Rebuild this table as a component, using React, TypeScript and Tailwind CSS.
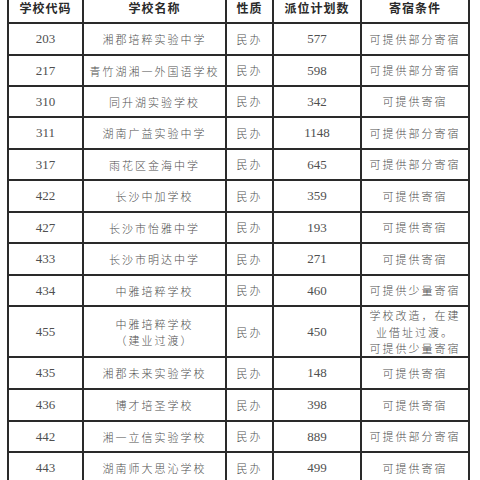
const rows: {
  code: string;
  name: string[];
  type: string;
  quota: string;
  lodging: string[];
  h: string;
}[] = [
  { code: "203", name: ["湘郡培粹实验中学"], type: "民办", quota: "577", lodging: ["可提供部分寄宿"], h: "h-[32px]" },
  { code: "217", name: ["青竹湖湘一外国语学校"], type: "民办", quota: "598", lodging: ["可提供部分寄宿"], h: "h-[31px]" },
  { code: "310", name: ["同升湖实验学校"], type: "民办", quota: "342", lodging: ["可提供寄宿"], h: "h-[31px]" },
  { code: "311", name: ["湖南广益实验中学"], type: "民办", quota: "1148", lodging: ["可提供部分寄宿"], h: "h-[32px]" },
  { code: "317", name: ["雨花区金海中学"], type: "民办", quota: "645", lodging: ["可提供部分寄宿"], h: "h-[31px]" },
  { code: "422", name: ["长沙中加学校"], type: "民办", quota: "359", lodging: ["可提供寄宿"], h: "h-[32px]" },
  { code: "427", name: ["长沙市怡雅中学"], type: "民办", quota: "193", lodging: ["可提供寄宿"], h: "h-[31px]" },
  { code: "433", name: ["长沙市明达中学"], type: "民办", quota: "271", lodging: ["可提供寄宿"], h: "h-[32px]" },
  { code: "434", name: ["中雅培粹学校"], type: "民办", quota: "460", lodging: ["可提供少量寄宿"], h: "h-[31px]" },
  {
    code: "455",
    name: ["中雅培粹学校", "（建业过渡）"],
    type: "民办",
    quota: "450",
    lodging: ["学校改造，在建", "业借址过渡。", "可提供少量寄宿"],
    h: "h-[51px]",
  },
  { code: "435", name: ["湘郡未来实验学校"], type: "民办", quota: "148", lodging: ["可提供寄宿"], h: "h-[32px]" },
  { code: "436", name: ["博才培圣学校"], type: "民办", quota: "398", lodging: ["可提供寄宿"], h: "h-[32px]" },
  { code: "442", name: ["湘一立信实验学校"], type: "民办", quota: "889", lodging: ["可提供部分寄宿"], h: "h-[31px]" },
  { code: "443", name: ["湖南师大思沁学校"], type: "民办", quota: "499", lodging: ["可提供寄宿"], h: "h-[32px]" },
];

const cjk = "font-['Noto_Sans_CJK_SC',sans-serif]";
const num = "font-['Liberation_Serif','Noto_Sans_CJK_SC',serif]";
const cell = "flex flex-col items-center justify-center border-r-2 border-[#2a2a2a] text-center";

export default function App() {
  return (
    <div className="h-[480px] w-[480px] overflow-hidden bg-white">
      <div className="ml-[7px] mt-[-8px] w-[463px] border-l-2 border-[#2a2a2a]">
        <div className="grid h-[32px] grid-cols-[75px_143px_47px_88px_108px] border-b-2 border-[#2a2a2a]">
          {["学校代码", "学校名称", "性质", "派位计划数", "寄宿条件"].map((t) => (
            <div
              key={t}
              className={`${cell} ${cjk} pt-[1px] text-[12px] font-bold tracking-[1px] text-[#2a2a2a]`}
            >
              {t}
            </div>
          ))}
        </div>
        {rows.map((r) => (
          <div
            key={r.code}
            className={`grid ${r.h} grid-cols-[75px_143px_47px_88px_108px] border-b-2 border-[#2a2a2a] text-[#505050]`}
          >
            <div className={`${cell} ${num} text-[13px]`}>{r.code}</div>
            <div className={`${cell} ${cjk} text-[11px] font-light leading-[16px] tracking-[2px]`}>
              {r.name.map((n) => (
                <span key={n}>{n}</span>
              ))}
            </div>
            <div className={`${cell} ${cjk} text-[11px] font-light tracking-[2px]`}>{r.type}</div>
            <div className={`${cell} ${num} text-[13px]`}>{r.quota}</div>
            <div className={`${cell} ${cjk} text-[11px] font-light leading-[16.5px] tracking-[2px]`}>
              {r.lodging.map((n) => (
                <span key={n} className="whitespace-nowrap">
                  {n}
                </span>
              ))}
            </div>
          </div>
        ))}
      </div>
    </div>
  );
}
